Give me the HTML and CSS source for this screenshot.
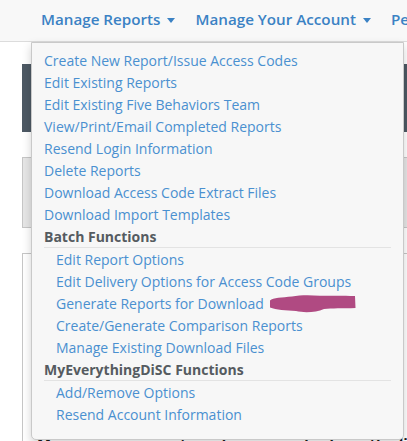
FILE: index.html
```html
<!DOCTYPE html>
<html lang="en">
<head>
    <meta charset="UTF-8">
    <meta name="viewport" content="width=device-width, initial-scale=1.0">
    <title>Manage Reports</title>
    <link rel="stylesheet" href="styles.css">
</head>
<body>
    <nav class="navbar">
        <ul class="nav">
            <li class="nav-item open">
                <a href="#" class="nav-link">Manage Reports <span class="caret"></span></a>
                <ul class="dropdown">
                    <li><a href="#">Create New Report/Issue Access Codes</a></li>
                    <li><a href="#">Edit Existing Reports</a></li>
                    <li><a href="#">Edit Existing Five Behaviors Team</a></li>
                    <li><a href="#">View/Print/Email Completed Reports</a></li>
                    <li><a href="#">Resend Login Information</a></li>
                    <li><a href="#">Delete Reports</a></li>
                    <li><a href="#">Download Access Code Extract Files</a></li>
                    <li><a href="#">Download Import Templates</a></li>
                    <li class="dropdown-header">Batch Functions</li>
                    <li class="sub"><a href="#">Edit Report Options</a></li>
                    <li class="sub"><a href="#">Edit Delivery Options for Access Code Groups</a></li>
                    <li class="sub marked">
                        <a href="#">Generate Reports for Download</a>
                        <svg class="scribble" width="86" height="18" viewBox="0 0 86 18">
                            <path d="M0 5.5 C3 2.5 12 2.5 22 1.5 C30 0 40 0 50 0.8 C62 0.8 72 0.6 85 1 L85.5 13 C72 13.5 62 13 54 14 C46 17.5 34 18 26 16 C16 15.5 6 15 0 12.5 Z" fill="#b04a82"/>
                        </svg>
                    </li>
                    <li class="sub"><a href="#">Create/Generate Comparison Reports</a></li>
                    <li class="sub"><a href="#">Manage Existing Download Files</a></li>
                    <li class="dropdown-header">MyEverythingDiSC Functions</li>
                    <li class="sub"><a href="#">Add/Remove Options</a></li>
                    <li class="sub"><a href="#">Resend Account Information</a></li>
                </ul>
            </li>
            <li class="nav-item">
                <a href="#" class="nav-link">Manage Your Account <span class="caret"></span></a>
            </li>
            <li class="nav-item">
                <a href="#" class="nav-link">People</a>
            </li>
        </ul>
    </nav>

    <div class="page">
        <div class="banner"></div>
        <div class="panel panel-gray"></div>
        <div class="panel panel-white">
            <p class="panel-text">Manage your reports and access codes from the list below using these tools.</p>
        </div>
    </div>
</body>
</html>
```

FILE: styles.css
```css
body {
    margin: 0;
    background-color: #fff;
    font-family: "Open Sans", "Noto Sans", sans-serif;
    font-size: 14px;
    overflow: hidden;
}

.navbar {
    height: 41px;
    background-color: #f8f8f8;
    border-bottom: 1px solid #dcdcdc;
}

.nav {
    list-style: none;
    margin: 0;
    padding: 0 0 0 31px;
    display: flex;
    white-space: nowrap;
}

.nav-item {
    position: relative;
}

.nav-link {
    display: block;
    padding: 0 10px;
    line-height: 38px;
    font-size: 15.2px;
    font-weight: 600;
    color: #3b82c4;
    text-decoration: none;
}

.caret {
    display: inline-block;
    width: 0;
    height: 0;
    margin-left: 3px;
    vertical-align: middle;
    border-top: 5px solid #3b82c4;
    border-left: 4.5px solid transparent;
    border-right: 4.5px solid transparent;
}

.dropdown {
    position: absolute;
    top: 42px;
    left: 0;
    z-index: 10;
    width: 371px;
    margin: 0;
    padding: 7px 0 13px;
    list-style: none;
    background-color: #f7f7f7;
    border: 1px solid #c9c9c9;
    border-radius: 0 0 5px 5px;
    box-shadow: 0 4px 10px rgba(0, 0, 0, 0.18);
}

.dropdown li {
    line-height: 22px;
}

.dropdown a {
    display: block;
    padding-left: 12px;
    font-size: 14px;
    color: #4a90d0;
    text-decoration: none;
}

.dropdown .sub a {
    padding-left: 24px;
}

.dropdown-header {
    margin: 0 12px 1px 12px;
    height: 21px;
    line-height: 21px;
    font-size: 14px;
    font-weight: 700;
    color: #555b60;
    border-bottom: 1px solid #e3e3e3;
}

.marked {
    position: relative;
}

.marked a {
    display: inline-block;
}

.scribble {
    position: absolute;
    left: 238px;
    top: 2px;
}

.page {
    padding: 22px 0 0 22px;
}

.banner {
    height: 68px;
    background-color: #4d5964;
}

.panel {
    border: 1px solid #c6c6c6;
    border-right: none;
}

.panel-gray {
    margin-top: 25px;
    height: 69px;
    background-color: #e6e6e6;
}

.panel-white {
    margin-top: 25px;
    height: 300px;
    background-color: #fff;
}

.panel-text {
    margin: 179px 0 0 14px;
    font-size: 15px;
    font-weight: 700;
    color: #1a1a1a;
    white-space: nowrap;
}
```
